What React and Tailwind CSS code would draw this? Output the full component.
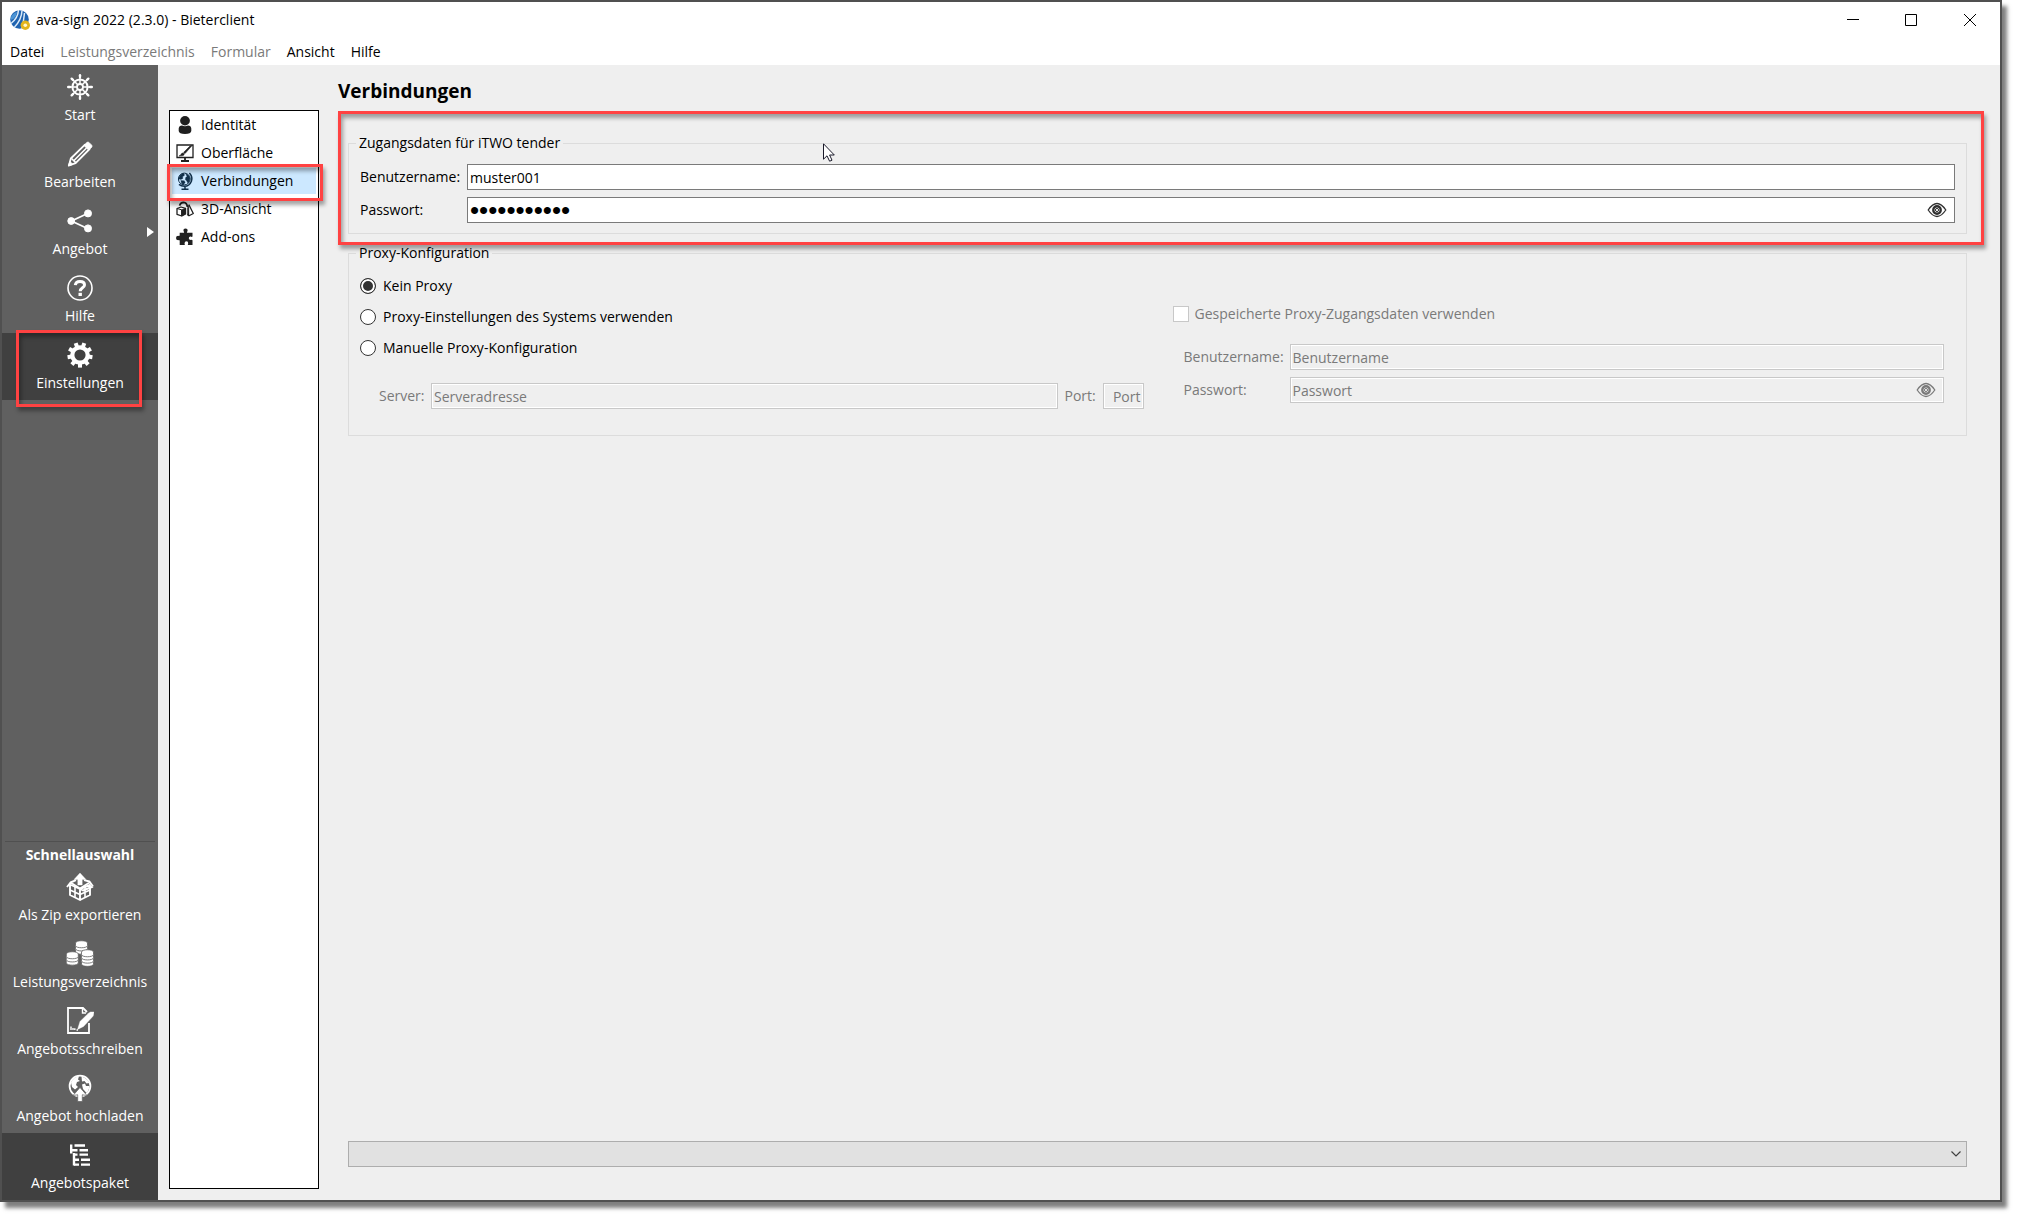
import { useState } from 'react';

function Wheel() {
  return (
    <svg viewBox="0 0 26 26" className="size-[26px]" fill="none" stroke="currentColor" strokeLinecap="round" aria-hidden="true">
      <circle cx="13" cy="13" r="7.6" strokeWidth="2" />
      <circle cx="13" cy="13" r="3" strokeWidth="1.8" />
      {[0, 45, 90, 135, 180, 225, 270, 315].map((a) => (
        <g key={a} transform={`rotate(${a} 13 13)`}>
          <path d="M13 9.5V2.5" strokeWidth="1.5" />
          <path d="M13 3V1.2" strokeWidth="2.4" />
        </g>
      ))}
    </svg>
  );
}

function Pencil() {
  return (
    <svg viewBox="0 0 26 26" className="size-[26px]" fill="none" stroke="currentColor" strokeLinejoin="round" aria-hidden="true">
      <path d="M2 24.5 3.8 17.5 18 3.6 22.6 8 8.6 22.2Z" strokeWidth="1.8" />
      <path d="M1.3 25 2.8 20.5 6 23.4Z" fill="currentColor" />
      <path d="M7 19.5 19.5 7M4.5 17.5 9 21.8" strokeWidth="1.6" />
      <path d="M16.8 4.4 20 1.3Q21 .6 22 1.4L24.8 4.2Q25.5 5.2 24.7 6.2L21.7 9.2Z" fill="currentColor" strokeWidth=".6" />
    </svg>
  );
}

function Share() {
  return (
    <svg viewBox="0 0 26 26" className="size-[26px]" fill="currentColor" stroke="currentColor" aria-hidden="true">
      <path d="M20.5 5.5 4.5 13 20.5 20.5" fill="none" strokeWidth="1.8" />
      <circle cx="4.2" cy="13" r="3.4" />
      <circle cx="21" cy="5.4" r="3.5" />
      <circle cx="21" cy="20.4" r="3.5" />
    </svg>
  );
}

function Help() {
  return (
    <svg viewBox="0 0 26 26" className="size-[26px]" fill="none" stroke="currentColor" aria-hidden="true">
      <circle cx="13" cy="13" r="12" strokeWidth="1.6" />
      <path d="M8.3 10.2C8.6 7.4 10.6 6.4 13 6.4C15.6 6.4 17.5 7.6 17.5 9.9C17.5 12.8 13.2 12.7 13.2 16.2" strokeWidth="3" />
      <path d="M13.2 17.8V21" strokeWidth="3.4" />
    </svg>
  );
}

function Gear() {
  return (
    <svg viewBox="0 0 26 26" className="size-[26px]" fill="none" stroke="currentColor" aria-hidden="true">
      <circle cx="13" cy="13" r="7.7" strokeWidth="4.2" />
      {[0, 40, 80, 120, 160, 200, 240, 280, 320].map((a) => (
        <path key={a} transform={`rotate(${a + 20} 13 13)`} d="M13 4.5V.4" strokeWidth="4" />
      ))}
    </svg>
  );
}

function Box() {
  return (
    <svg viewBox="0 0 28 28" className="size-7" fill="none" stroke="currentColor" strokeWidth="1.9" strokeLinejoin="round" aria-hidden="true">
      <path d="M4 11.5V22L14 27V16L4 11.5M14 16 24 12V22L14 27" />
      <path d="M9 13.5V24.5M4 17 14 21.5 24 17M19 14V24.5" strokeWidth="1.6" />
      <path d="M1 14 4.5 9.5 10 7.2M27 13.5 23.5 8.5 18 7.2M14 16 17 17.5 27 13.5M4.5 9.5 14 15.5 23.5 9.5" />
      <path d="M14 0 20 6.5H16.2V12H11.8V6.5H8Z" fill="currentColor" strokeWidth=".4" />
    </svg>
  );
}

function Coins() {
  const stacks = [
    { x: 15.5, y: 3, n: 3 },
    { x: 6.3, y: 14, n: 3 },
    { x: 21.5, y: 12, n: 4 },
  ];
  return (
    <svg viewBox="0 0 28 28" className="size-7" aria-hidden="true">
      {stacks.map((s) => (
        <g key={s.x} className="fill-white stroke-[#606060]">
          {Array.from({ length: s.n }, (_, i) => s.n - 1 - i).map((i) => (
            <path
              key={i}
              strokeWidth=".8"
              d={`M${s.x - 6} ${s.y + i * 3.2}v2.5c0 3 12 3 12 0v-2.5c0-3-12-3-12 0z`}
            />
          ))}
        </g>
      ))}
    </svg>
  );
}

function Letter() {
  return (
    <svg viewBox="0 0 28 28" className="size-7" fill="none" stroke="currentColor" aria-hidden="true">
      <path d="M23 16V26H2V1H17L21 5" strokeWidth="1.8" />
      <path d="M16.5 1V6H20" strokeWidth="1.4" />
      <path d="M11.5 22.5 14 14.5 22.5 6.2 24.5 5 28 5 27.2 9 17.5 19.5Z" fill="currentColor" strokeWidth=".4" />
      <path d="M5 19.5V23M7 21V23M8.8 21.2V23M10.5 23H12" strokeWidth="1.4" />
    </svg>
  );
}

function GlobeUp() {
  return (
    <svg viewBox="0 0 28 28" className="size-7" aria-hidden="true">
      <circle cx="14" cy="12" r="10.4" fill="none" stroke="currentColor" strokeWidth="1.8" />
      <path d="M5 8.5Q7.5 3 13 2.2L12 5.5 14 7 11 8 10 11 12 13 9 15.5 6 13ZM15.5 2.5Q21 4 23.5 9L20.5 9.5 18.5 7 16 7.5ZM16 10.5 19 9.5 20 12 23.5 12Q23 17 20.5 19L17 15Z" fill="currentColor" />
      <path d="M14 13.5 21 21.5 16.3 20.8V27.5H11.7V20.8L7 21.5Z" fill="currentColor" className="stroke-[#606060]" strokeWidth=".7" />
    </svg>
  );
}

function Tree() {
  return (
    <svg viewBox="0 0 28 28" className="size-7" fill="none" stroke="currentColor" strokeWidth="2.4" aria-hidden="true">
      <path d="M5.2 3.5V12.5M8 12V24.5" />
      <path d="M8.5 4.5H19M4 9.2H11.5M13.5 9.2H22M7 13.6H11.5M13.5 13.6H22M8 18.8H13M15 18.8H24M8 23.6H13M15 23.6H24" />
    </svg>
  );
}

function UserIcon() {
  return (
    <svg viewBox="0 0 18 18" className="size-[18px]" fill="currentColor" aria-hidden="true">
      <ellipse cx="9" cy="4.7" rx="4.9" ry="4.7" />
      <path d="M2.7 15V12.5Q3 9.4 6 9.4Q9 11 12 9.4Q15 9.4 15.3 12.5V15Q15 18 9 18T2.7 15Z" />
    </svg>
  );
}

function ScreenBrush() {
  return (
    <svg viewBox="0 0 18 18" className="size-[18px]" fill="none" stroke="currentColor" aria-hidden="true">
      <path d="M17 1V13.5H1V1Z" strokeWidth="1.3" />
      <path d="M9 13.5V16.5M5 17H13" strokeWidth="1.8" />
      <path d="M16 1.6 9 9.6 7.6 8.4 14 2Z" fill="currentColor" strokeWidth=".6" />
      <path d="M3 12Q5 11.5 5.3 9.8Q6.6 8.2 8.2 9.8Q8.6 12.2 3 12Z" fill="currentColor" strokeWidth=".5" />
    </svg>
  );
}

function GlobeStand() {
  return (
    <svg viewBox="0 0 18 18" className="size-[18px]" fill="none" stroke="currentColor" aria-hidden="true">
      <circle cx="8.3" cy="7" r="5.9" strokeWidth="1" />
      <path
        d="M2.8 7Q3.2 2.4 7.8 1.3L8.6 3.2 6.6 4.8 6.9 6.4 4.9 7.4ZM4.8 8.5 8.3 8.8 9.2 10.4 7.6 12.6 5.6 11.4ZM9.6 1.5Q13 2.5 14 6L13.4 9 12 11.4 10.8 9 9.4 7.8 9.6 5.6 11 4.6Z"
        fill="currentColor"
        strokeWidth=".3"
      />
      <path d="M13.4 1Q17 5 15.4 9.2Q13.5 14.2 8.5 14.2Q5 14.2 3 12.4M9 14.5V17M5.5 17.2H12.5" strokeWidth="1.5" />
    </svg>
  );
}

function Shapes() {
  return (
    <svg viewBox="0 0 18 18" className="size-[18px]" fill="none" stroke="currentColor" strokeLinejoin="round" aria-hidden="true">
      <path d="M3.6 5.6Q4.4 2.3 7.6 2.3Q11 2.5 11.4 7" strokeWidth="1.8" />
      <path d="M1 8.5 5 7 9.5 8.3V14L5.8 16 1 14.3Z" strokeWidth="1.3" />
      <path d="M1 8.5 5.6 9.8V16" strokeWidth="1" />
      <path d="M5.6 9.8 9.5 8.3V14L5.6 16Z" fill="currentColor" strokeWidth=".6" />
      <path d="M12.8 4.5 17.3 13.5 13 15.8 11.2 14.5" strokeWidth="1.3" />
      <path d="M12.8 5 13 15.4 11.4 14.4V8Z" fill="currentColor" strokeWidth=".4" />
    </svg>
  );
}

function Puzzle() {
  return (
    <svg viewBox="0 0 18 18" className="size-[18px]" fill="currentColor" aria-hidden="true">
      <path d="M3.7 4.7H8Q8.5 4 7.6 3.2Q6.9.5 9.5.5T11.5 3.2Q10.6 4 11 4.7H16.5V8.5Q16 9.2 14.8 8.6Q12.8 8.4 12.8 10.2T14.8 12Q16 11.5 16.5 12.2V17H12Q11.5 16.3 12.2 15.4Q12.4 13.2 10.5 13.2T8.5 15.4Q9.2 16.3 8.6 17H3.7V12.5Q3.2 11.8 2.3 12.2Q0 12.2 0 10T2.3 7.8Q3.2 8.3 3.7 7.5Z" />
    </svg>
  );
}

function Eye() {
  return (
    <svg viewBox="0 0 20 16" className="w-5 h-4" fill="none" stroke="currentColor" aria-hidden="true">
      <path d="M1.2 8Q10-5 18.8 8Q10 21 1.2 8Z" strokeWidth="1.3" />
      <circle cx="10" cy="8" r="3.7" strokeWidth="2.4" />
      <circle cx="10" cy="8" r="1.6" strokeWidth="1" />
    </svg>
  );
}

function Logo() {
  return (
    <svg viewBox="0 0 20 20" className="size-5" aria-hidden="true">
      <circle cx="9.5" cy="9.5" r="9.3" fill="#1f63b0" />
      <path d="M8.5 0Q8 8 1 13.5M12 .8Q11.5 10 4.5 17M14.5 3Q13.5 12 12 18.5" fill="none" stroke="#dcebf8" strokeWidth="1.5" />
      <path d="M1 7Q3 3 7 2L6 6Q4 9 .6 10Z" fill="#4b95d6" />
      <circle cx="15.3" cy="15.3" r="4.7" fill="#e2b41c" />
      <circle cx="15.3" cy="15.3" r="1.8" fill="#fff6cf" />
    </svg>
  );
}

// red callout frame laid over a part of the window
function Frame({ className }) {
  return (
    <div
      className={`absolute z-10 pointer-events-none border-3 border-[#ff4242] shadow-[2px_4px_4px_rgba(0,0,0,0.35),inset_2px_4px_4px_rgba(0,0,0,0.35)] ${className}`}
    />
  );
}

function NavButton({ icon: Icon, label, active, arrow, framed }) {
  return (
    <button
      type="button"
      className={`relative w-full h-[67px] flex flex-col items-center justify-center text-white ${active ? 'bg-[#404040]' : ''}`}
    >
      <span className="h-7 flex items-center"><Icon /></span>
      <span className="leading-5 mt-1 whitespace-nowrap">{label}</span>
      {arrow && (
        <svg viewBox="0 0 8 10" className="absolute right-[3px] top-[28px] w-2 h-2.5" aria-hidden="true">
          <path d="M0 0 7 5 0 10Z" fill="#fff" />
        </svg>
      )}
      {framed && <Frame className="left-[14px] right-4 -top-[3px] -bottom-[7px]" />}
    </button>
  );
}

const mainNav = [
  { label: 'Start', icon: Wheel },
  { label: 'Bearbeiten', icon: Pencil },
  { label: 'Angebot', icon: Share, arrow: true },
  { label: 'Hilfe', icon: Help },
  { label: 'Einstellungen', icon: Gear, active: true, framed: true },
];

const quickNav = [
  { label: 'Als Zip exportieren', icon: Box },
  { label: 'Leistungsverzeichnis', icon: Coins },
  { label: 'Angebotsschreiben', icon: Letter },
  { label: 'Angebot hochladen', icon: GlobeUp },
  { label: 'Angebotspaket', icon: Tree, active: true },
];

const pages = [
  { label: 'Identität', icon: UserIcon },
  { label: 'Oberfläche', icon: ScreenBrush },
  { label: 'Verbindungen', icon: GlobeStand, active: true },
  { label: '3D-Ansicht', icon: Shapes },
  { label: 'Add-ons', icon: Puzzle },
];

const menus = [
  { label: 'Datei' },
  { label: 'Leistungsverzeichnis', disabled: true },
  { label: 'Formular', disabled: true },
  { label: 'Ansicht' },
  { label: 'Hilfe' },
];

const proxyModes = ['Kein Proxy', 'Proxy-Einstellungen des Systems verwenden', 'Manuelle Proxy-Konfiguration'];

const field = 'block w-full min-w-0 h-[26px] border px-[2px] outline-none';
const enabledField = `${field} bg-white border-[#7a7a7a]`;
const disabledField = `${field} bg-[#efefef] border-[#c8c8c8] shadow-[inset_0_0_0_1px_#fff] text-[#7a7a7a] placeholder:text-[#7a7a7a]`;

function TitleBar() {
  return (
    <div className="h-9 flex items-center bg-white">
      <div className="flex items-center gap-[6px] pl-2">
        <Logo />
        <span>ava-sign 2022 (2.3.0) - Bieterclient</span>
      </div>
      <div className="ml-auto h-full flex items-center text-black">
        <button type="button" aria-label="Minimieren" className="w-[58px] h-full flex items-center justify-center">
          <svg viewBox="0 0 12 12" className="size-3"><path d="M0 5.5H12" stroke="currentColor" /></svg>
        </button>
        <button type="button" aria-label="Maximieren" className="w-[58px] h-full flex items-center justify-center">
          <svg viewBox="0 0 12 12" className="size-3"><path d="M.5.5H11.5V11.5H.5Z" fill="none" stroke="currentColor" /></svg>
        </button>
        <button type="button" aria-label="Schließen" className="w-[60px] h-full flex items-center justify-center">
          <svg viewBox="0 0 12 12" className="size-3"><path d="M0 0 12 12M12 0 0 12" stroke="currentColor" /></svg>
        </button>
      </div>
    </div>
  );
}

function Settings() {
  const [mode, setMode] = useState(0);
  const [user, setUser] = useState('muster001');
  const [password, setPassword] = useState('geheim12345');
  const [visible, setVisible] = useState(false);

  return (
    <main className="flex-1 min-w-0 flex flex-col pl-[19px] pr-[33px] pt-[14px] pb-[33px]">
      <h1 className="text-[19px] leading-6 font-bold">Verbindungen</h1>

      <div className="relative mt-[30px] ml-[10px]">
        <fieldset className="min-w-0 border border-[#dcdcdc] pl-[11px] pr-[11px] pt-[11px] pb-[10px]">
          <legend className="-ml-1 px-[3px] leading-5">Zugangsdaten für iTWO tender</legend>
          <div className="grid grid-cols-[107px_1fr] gap-y-[7px] items-center">
            <label htmlFor="user">Benutzername:</label>
            <input id="user" className={enabledField} value={user} onChange={(e) => setUser(e.target.value)} />
            <label htmlFor="password">Passwort:</label>
            <div className="relative">
              <input
                id="password"
                type={visible ? 'text' : 'password'}
                className={`${enabledField} ${visible ? '' : 'font-["Liberation_Sans",sans-serif] text-[26px]'}`}
                value={password}
                onChange={(e) => setPassword(e.target.value)}
              />
              <button
                type="button"
                aria-label="Passwort anzeigen"
                onClick={() => setVisible(!visible)}
                className="absolute right-2 top-[5px] text-[#303030]"
              >
                <Eye />
              </button>
            </div>
          </div>
        </fieldset>
        <Frame className="-left-[10px] -right-[17px] -top-[22px] -bottom-[11px]" />
      </div>

      <fieldset className="min-w-0 mt-[9px] ml-[10px] border border-[#dcdcdc] pl-[11px] pr-[22px] pb-[26px]">
        <legend className="-ml-1 px-[3px] leading-5">Proxy-Konfiguration</legend>
        <div className="grid grid-cols-[783fr_771fr] gap-x-[29px]">
          <div className="pt-[7px]">
            {proxyModes.map((label, i) => (
              <label key={label} className="w-fit h-[31px] flex items-center gap-[7px]">
                <input
                  type="radio"
                  name="proxy"
                  checked={mode === i}
                  onChange={() => setMode(i)}
                  className="appearance-none size-4 rounded-full border border-[#333] bg-white checked:bg-[#333] checked:shadow-[inset_0_0_0_2px_#fff]"
                />
                {label}
              </label>
            ))}
            <div className="mt-5 pl-[19px] flex items-center text-[#7a7a7a]">
              <label htmlFor="server" className="w-[52px] shrink-0">Server:</label>
              <input id="server" disabled placeholder="Serveradresse" className={disabledField} />
              <label htmlFor="port" className="w-[45px] pl-[7px] shrink-0">Port:</label>
              <div className="w-[41px] shrink-0">
                <input id="port" disabled placeholder="Port" className={`${disabledField} text-right`} />
              </div>
            </div>
          </div>

          <div className="pt-[41px] text-[#7a7a7a]">
            <label className="w-fit h-5 flex items-center gap-[6px]">
              <input type="checkbox" disabled className="appearance-none size-4 border border-[#c8c8c8] bg-white" />
              Gespeicherte Proxy-Zugangsdaten verwenden
            </label>
            <div className="mt-5 pl-[11px] grid grid-cols-[106px_1fr] gap-y-[7px] items-center">
              <label htmlFor="proxy-user">Benutzername:</label>
              <input id="proxy-user" disabled placeholder="Benutzername" className={disabledField} />
              <label htmlFor="proxy-password">Passwort:</label>
              <div className="relative">
                <input id="proxy-password" type="password" disabled placeholder="Passwort" className={disabledField} />
                <button type="button" disabled aria-label="Proxy-Passwort anzeigen" className="absolute right-2 top-[5px]">
                  <Eye />
                </button>
              </div>
            </div>
          </div>
        </div>
      </fieldset>

      <div className="relative mt-auto ml-[10px]">
        <select aria-label="Meldungen" className="appearance-none block w-full h-[26px] border border-[#adadad] bg-[#e1e1e1] px-2">
          <option />
        </select>
        <svg viewBox="0 0 10 6" className="absolute right-[6px] top-[10px] w-2.5 h-1.5 pointer-events-none" aria-hidden="true">
          <path d="M.5.5 5 5 9.5.5" fill="none" stroke="#404040" strokeWidth="1.2" />
        </svg>
      </div>
    </main>
  );
}

export default function App() {
  return (
    <div className="h-screen bg-white pr-[15px] pb-[15px] overflow-hidden font-['Open_Sans','Noto_Sans',sans-serif] text-[14px] leading-5 text-black">
      <div className="relative h-full flex flex-col border-2 border-[#505050] bg-[#efefef] shadow-[5px_6px_4px_rgba(0,0,0,0.5)]">
        <TitleBar />
        <nav className="h-[27px] pl-2 flex items-center gap-4 bg-white">
          {menus.map((m) => (
            <button key={m.label} type="button" disabled={m.disabled} className="disabled:text-[#7a7a7a]">
              {m.label}
            </button>
          ))}
        </nav>

        <div className="flex-1 min-h-0 flex">
          <aside className="w-[156px] shrink-0 flex flex-col bg-[#606060]">
            {mainNav.map((n) => <NavButton key={n.label} {...n} />)}
            <div className="mt-auto mx-[3px] border-t border-[#505050]" />
            <h2 className="h-[23px] pt-[3px] text-center font-bold text-white">Schnellauswahl</h2>
            {quickNav.map((n) => <NavButton key={n.label} {...n} />)}
          </aside>

          <ul className="w-[150px] shrink-0 mt-[45px] mb-[11px] ml-[11px] border border-black bg-white px-[2px] pt-px">
            {pages.map((p) => (
              <li key={p.label} className="relative mb-[2px]">
                <button
                  type="button"
                  className={`w-full h-[26px] pl-1 flex items-center gap-[7px] ${p.active ? 'bg-[#cce8ff] text-[#12304a]' : 'text-[#202020]'}`}
                >
                  <p.icon />
                  <span className="text-black">{p.label}</span>
                </button>
                {p.active && <Frame className="-left-[5px] -right-[7px] -top-[4px] -bottom-[7px]" />}
              </li>
            ))}
          </ul>

          <Settings />
        </div>

        <svg viewBox="0 0 12 19" className="absolute left-[821px] top-[141px] z-20 w-3 h-[19px]" aria-hidden="true">
          <path d="M.5.8V16.2L4 12.8 6.6 18.2 9 17.2 6.6 12H11.3Z" fill="#fff" stroke="#1a1a2a" />
        </svg>
      </div>
    </div>
  );
}
